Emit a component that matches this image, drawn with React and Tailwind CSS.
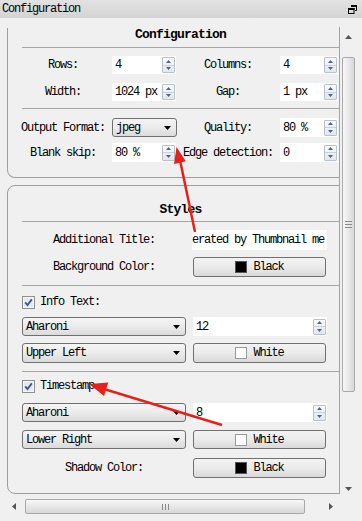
import React from "react";

const txt = "text-[12px] tracking-[-1.2px] text-black leading-[14px]";

const Arrows = () => (
  <div className="w-[13px] h-[16px] mr-[1px] flex flex-col border border-[#b9c1cf] rounded-[1px] bg-gradient-to-b from-[#fafafa] to-[#e3e6eb]">
    <div className="flex-1 flex items-center justify-center border-b border-[#cbd1db]">
      <svg width="5" height="3">
        <path d="M0 3 L2.5 0 L5 3z" fill="#4f6089" />
      </svg>
    </div>
    <div className="flex-1 flex items-center justify-center">
      <svg width="5" height="3">
        <path d="M0 0 L5 0 L2.5 3z" fill="#4f6089" />
      </svg>
    </div>
  </div>
);

const Spin = ({ value, className }) => (
  <div className={"h-full bg-white flex items-center " + className}>
    <span className="flex-1 pl-[3px]">{value}</span>
    <Arrows />
  </div>
);

const Combo = ({ text, className }) => (
  <div
    className={
      "h-full border border-[#707070] rounded-[3px] bg-gradient-to-b from-[#f5f5f5] via-[#ebebeb] to-[#dbdbdb] flex items-center pl-[3px] pr-[5px] " +
      className
    }
  >
    <span className="flex-1">{text}</span>
    <svg width="7" height="4">
      <path d="M0 0 H7 L3.5 4z" fill="#000" />
    </svg>
  </div>
);

const ColorButton = ({ color, text, className }) => (
  <div
    className={
      "h-full border border-[#707070] rounded-[3px] bg-gradient-to-b from-[#f3f3f3] via-[#ebebeb] to-[#d9d9d9] flex items-center justify-center gap-[6px] " +
      className
    }
  >
    <span
      className={
        "w-[12px] h-[12px] border " +
        (color === "black" ? "bg-black border-[#555]" : "bg-white border-[#9a9a9a]")
      }
    />
    <span>{text}</span>
  </div>
);

const Check = ({ label }) => (
  <div className="flex items-center h-[14px] ml-[14px] gap-[5px]">
    <svg width="13" height="13">
      <rect x="0.5" y="0.5" width="12" height="12" fill="#f6f6f6" stroke="#8e8f8f" />
      <rect x="2" y="2" width="9" height="9" fill="#e6e9ef" />
      <path d="M3.2 6.3 L5.5 9 L9.8 3.4" stroke="#3f5290" strokeWidth="1.8" fill="none" />
    </svg>
    <span>{label}</span>
  </div>
);

const Sep = ({ className }) => (
  <div className={"h-px bg-[#a6a6a6] mx-[14px] " + className} />
);

const CfgRow = ({ l1, left, l2, v2, h }) => (
  <div className={"flex items-center ml-[6px] " + h}>
    <div className="w-[98px] text-center">{l1}</div>
    <div className="w-[64px] h-full">{left}</div>
    <div className="w-[104px] text-center">{l2}</div>
    <div className="w-[60px] h-full">
      <Spin value={v2} className="w-[58px]" />
    </div>
  </div>
);

const StyleRow = ({ left, right, h, className }) => (
  <div className={"flex items-center ml-[14px] " + h + " " + (className || "")}>
    <div className="w-[164px] h-full flex items-center justify-center">{left}</div>
    <div className="w-[134px] ml-[7px] h-full">{right}</div>
  </div>
);

export default function App() {
  return (
    <div
      className={
        "relative w-[362px] h-[521px] overflow-hidden bg-[#f0f0f0] font-[family-name:Liberation_Mono,Courier_New,monospace] " +
        txt
      }
    >
      {/* title bar */}
      <div className="h-[18px] bg-gradient-to-b from-[#e2e2e2] to-[#d4d4d4] flex items-center pl-[2px] pr-[5px]">
        <span className="flex-1">Configuration</span>
        <svg width="9" height="9" viewBox="0 0 9 9">
          <path d="M3 0.5 H8.5 V5.5 H7" stroke="#000" fill="none" />
          <rect x="3" y="0" width="6" height="2" fill="#000" />
          <rect x="0.5" y="3.5" width="5.5" height="5" stroke="#000" fill="none" />
          <rect x="0" y="3" width="6.5" height="2" fill="#000" />
        </svg>
      </div>

      <div className="h-[9px]" />

      {/* body */}
      <div className="flex h-[467px]">
        <div className="w-[340px] h-full overflow-hidden border-r border-[#a3a3a3] pl-[7px]">
          {/* Configuration group */}
          <div className="w-[347px] border-l border-r border-b border-[#9e9e9e] rounded-b-[8px] pb-[15px]">
            <div className="mt-[1px] h-[14px] text-center text-[13px] font-bold tracking-[-0.8px]">
              Configuration
            </div>
            <Sep className="mt-[5px]" />
            <div className="mt-[8px]">
              <CfgRow
                h="h-[18px]"
                l1="Rows:"
                left={<Spin value="4" className="w-[64px]" />}
                l2="Columns:"
                v2="4"
              />
            </div>
            <div className="mt-[9px]">
              <CfgRow
                h="h-[18px]"
                l1="Width:"
                left={<Spin value="1024 px" className="w-[64px]" />}
                l2="Gap:"
                v2="1 px"
              />
            </div>
            <Sep className="mt-[7px]" />
            <div className="mt-[9px]">
              <CfgRow
                h="h-[19px]"
                l1="Output Format:"
                left={<Combo text="jpeg" className="w-[65px]" />}
                l2="Quality:"
                v2="80 %"
              />
            </div>
            <div className="mt-[6px]">
              <CfgRow
                h="h-[19px]"
                l1="Blank skip:"
                left={<Spin value="80 %" className="w-[64px]" />}
                l2="Edge detection:"
                v2="0"
              />
            </div>
          </div>

          {/* Styles group */}
          <div className="w-[347px] mt-[7px] border border-[#9e9e9e] rounded-[8px] pb-[15px]">
            <div className="mt-[17px] h-[14px] text-center text-[13px] font-bold tracking-[-0.8px]">
              Styles
            </div>
            <Sep className="mt-[4px]" />
            <StyleRow
              className="mt-[8px]"
              h="h-[20px]"
              left={<span>Additional Title:</span>}
              right={
                <div className="h-full w-[135px] -ml-[1px] bg-white flex items-center overflow-hidden whitespace-nowrap">
                  erated by Thumbnail me
                </div>
              }
            />
            <StyleRow
              className="mt-[7px]"
              h="h-[20px]"
              left={<span>Background Color:</span>}
              right={<ColorButton color="black" text="Black" className="w-[133px]" />}
            />
            <Sep className="mt-[8px]" />
            <div className="mt-[9px]">
              <Check label="Info Text:" />
            </div>
            <StyleRow
              className="mt-[8px]"
              h="h-[19px]"
              left={<Combo text="Aharoni" className="w-[164px]" />}
              right={<Spin value="12" className="w-[134px]" />}
            />
            <StyleRow
              className="mt-[7px]"
              h="h-[20px]"
              left={<Combo text="Upper Left" className="w-[164px]" />}
              right={<ColorButton color="white" text="White" className="w-[133px]" />}
            />
            <Sep className="mt-[8px]" />
            <div className="mt-[7px]">
              <Check label="Timestamp" />
            </div>
            <StyleRow
              className="mt-[10px]"
              h="h-[19px]"
              left={<Combo text="Aharoni" className="w-[164px]" />}
              right={<Spin value="8" className="w-[134px]" />}
            />
            <StyleRow
              className="mt-[8px]"
              h="h-[19px]"
              left={<Combo text="Lower Right" className="w-[164px]" />}
              right={<ColorButton color="white" text="White" className="w-[133px]" />}
            />
            <StyleRow
              className="mt-[9px]"
              h="h-[20px]"
              left={<span>Shadow Color:</span>}
              right={<ColorButton color="black" text="Black" className="w-[133px]" />}
            />
          </div>
        </div>

        {/* vertical scrollbar */}
        <div className="w-[17px] h-full flex flex-col items-center">
          <div className="h-[19px] flex items-center justify-center">
            <svg width="7" height="4">
              <path d="M0 4 L3.5 0 L7 4z" fill="#555" />
            </svg>
          </div>
          <div className="mt-[11px] w-[13px] h-[335px] border border-[#a9a9a9] rounded-[2px] bg-gradient-to-r from-[#f8f8f8] to-[#d8d8d8] flex flex-col items-center justify-center gap-[2px]">
            <div className="w-[7px] h-px bg-[#8a8a8a]" />
            <div className="w-[7px] h-px bg-[#8a8a8a]" />
            <div className="w-[7px] h-px bg-[#8a8a8a]" />
          </div>
          <div className="flex-1" />
          <div className="h-[17px] pt-[6px] flex items-center justify-center">
            <svg width="7" height="4">
              <path d="M0 0 L7 0 L3.5 4z" fill="#555" />
            </svg>
          </div>
        </div>
      </div>

      {/* horizontal scrollbar */}
      <div className="pt-[5px] flex items-center h-[20px]">
        <div className="w-[25px] h-[15px] flex items-center justify-center pl-[2px]">
          <svg width="4" height="7">
            <path d="M4 0 L0 3.5 L4 7z" fill="#555" />
          </svg>
        </div>
        <div className="w-[280px] h-[15px] border border-[#a9a9a9] rounded-[2px] bg-gradient-to-b from-[#f8f8f8] to-[#d8d8d8] flex items-center justify-center gap-[2px]">
          <div className="w-px h-[6px] bg-[#8a8a8a]" />
          <div className="w-px h-[6px] bg-[#8a8a8a]" />
          <div className="w-px h-[6px] bg-[#8a8a8a]" />
        </div>
        <div className="ml-[24px]">
          <svg width="4" height="7">
            <path d="M0 0 L4 3.5 L0 7z" fill="#555" />
          </svg>
        </div>
      </div>

      {/* red annotation arrows */}
      <svg
        className="absolute inset-0 pointer-events-none"
        width="362"
        height="521"
      >
        <line x1="195" y1="232" x2="180" y2="160" stroke="#e8201c" strokeWidth="2.5" />
        <polygon points="176.5,147 185.8,161.3 174,163.9" fill="#e8201c" />
        <line x1="222" y1="425" x2="104" y2="389" stroke="#e8201c" strokeWidth="2.5" />
        <polygon points="89,384 104.1,396 108.3,382.6" fill="#e8201c" />
      </svg>
    </div>
  );
}
